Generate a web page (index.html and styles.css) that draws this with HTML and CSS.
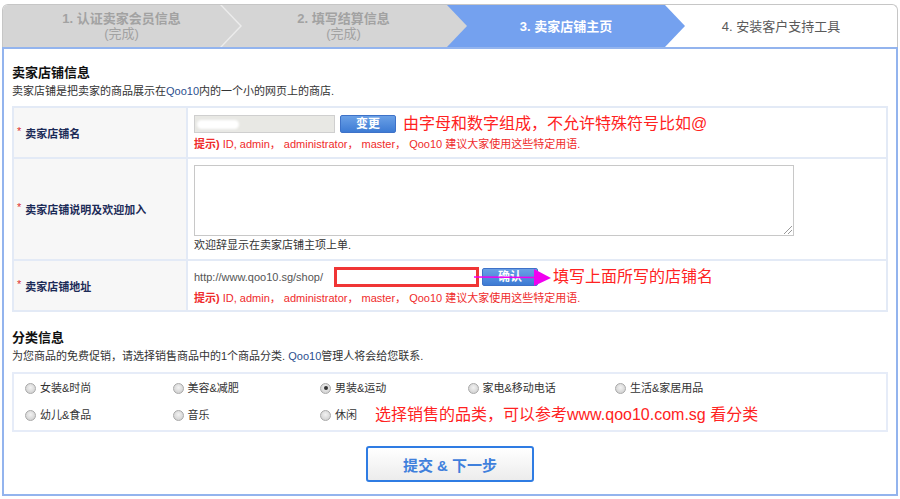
FILE: index.html
```html
<!DOCTYPE html>
<html lang="zh-CN">
<head>
<meta charset="utf-8">
<title>卖家店铺主页</title>
<link rel="stylesheet" href="styles.css">
</head>
<body>
<div class="page">
  <div class="steps">
    <div class="step done first"><span class="st-title">1. 认证卖家会员信息</span><span class="st-sub">(完成)</span></div>
    <div class="step done second"><span class="st-title">2. 填写结算信息</span><span class="st-sub">(完成)</span></div>
    <div class="step current"><span class="st-title">3. 卖家店铺主页</span></div>
    <div class="step todo"><span class="st-title">4. 安装客户支持工具</span></div>
  </div>
  <div class="main">
    <h2 class="sec-title first-sec">卖家店铺信息</h2>
    <p class="sec-desc">卖家店铺是把卖家的商品展示在<span class="qoo">Qoo10</span>内的一个小的网页上的商店.</p>

    <div class="form">
      <div class="row row-name">
        <div class="label"><span class="req">*</span>卖家店铺名</div>
        <div class="value">
          <div class="line">
            <span class="txt-input gray"><span class="blur"></span></span>
            <span class="btn">变更</span>
            <span class="note">由字母和数字组成，不允许特殊符号比如@</span>
          </div>
          <div class="hint"><b>提示)</b> ID, admin， administrator， master， Qoo10 建议大家使用这些特定用语.</div>
        </div>
      </div>
      <div class="row row-desc">
        <div class="label"><span class="req">*</span>卖家店铺说明及欢迎加入</div>
        <div class="value">
          <div class="textarea"><span class="grip"></span></div>
          <div class="plain">欢迎辞显示在卖家店铺主项上单.</div>
        </div>
      </div>
      <div class="row row-url">
        <div class="label"><span class="req">*</span>卖家店铺地址</div>
        <div class="value">
          <div class="line">
            <span class="url">http://www.qoo10.sg/shop/</span>
            <span class="txt-input red"></span>
            <span class="btn-wrap">
              <span class="btn">确认</span>
              <svg class="arrow" width="80" height="20" viewBox="0 0 80 20"><line x1="0" y1="9" x2="62" y2="9.5" stroke="#f000f0" stroke-width="1.6"/><polygon points="60,1 77,10 60,18" fill="#f000f0"/></svg>
            </span>
            <span class="note note2">填写上面所写的店铺名</span>
          </div>
          <div class="hint"><b>提示)</b> ID, admin， administrator， master， Qoo10 建议大家使用这些特定用语.</div>
        </div>
      </div>
    </div>

    <h2 class="sec-title second-sec">分类信息</h2>
    <p class="sec-desc">为您商品的免费促销，请选择销售商品中的1个商品分类. <span class="qoo">Qoo10</span>管理人将会给您联系.</p>

    <div class="cats">
      <div class="cat"><span class="radio"></span>女装&amp;时尚</div>
      <div class="cat"><span class="radio"></span>美容&amp;减肥</div>
      <div class="cat"><span class="radio checked"></span>男装&amp;运动</div>
      <div class="cat"><span class="radio"></span>家电&amp;移动电话</div>
      <div class="cat"><span class="radio"></span>生活&amp;家居用品</div>
      <div class="cat"><span class="radio"></span>幼儿&amp;食品</div>
      <div class="cat"><span class="radio"></span>音乐</div>
      <div class="cat"><span class="radio"></span>休闲<span class="note note3">选择销售的品类，可以参考www.qoo10.com.sg 看分类</span></div>
    </div>

    <div class="submit-row"><span class="submit">提交 &amp; 下一步</span></div>
  </div>
</div>
</body>
</html>
```
FILE: styles.css
```css
* { box-sizing: border-box; }
html, body { margin: 0; padding: 0; background: #fff; }
body {
  font-family: "Liberation Sans", "Noto Sans CJK SC", sans-serif;
  font-size: 11px;
  color: #333;
}
.page { width: 900px; padding: 4px 2px 0 2px; }

/* steps */
.steps {
  display: flex;
  height: 43px;
  border: 1px solid #c6c6c6;
  border-bottom: 0;
  border-radius: 6px 6px 0 0;
  overflow: hidden;
  background: #fff;
}
.step {
  position: relative;
  display: flex;
  flex-direction: column;
  align-items: center;
  justify-content: center;
  padding-left: 20px;
  font-size: 13px;
  line-height: 15px;
}
.step.first { flex: 0 0 217px; padding-left: 0; }
.step.first .st-title, .step.first .st-sub { position: relative; left: 10px; }
.step.second { flex: 0 0 227px; }
.step.current { flex: 0 0 218px; }
.step.todo { flex: 1 1 auto; padding-left: 0; }
.step.done { background: #d5d5d5; color: #a2a2a2; }
.step.current { background: #74a1ef; color: #fff; }
.step.todo { color: #5a5a5a; }
.st-title { font-weight: bold; }
.step.todo .st-title { font-weight: normal; }
.st-sub { font-weight: normal; }
.step.done::after, .step.current::after {
  content: "";
  position: absolute;
  top: 0;
  right: -20px;
  width: 20px;
  height: 100%;
  background: inherit;
  clip-path: polygon(0 0, 100% 50%, 0 100%);
  z-index: 2;
}
.step.first::before {
  content: "";
  position: absolute;
  top: -2px;
  right: -22px;
  width: 22px;
  height: calc(100% + 4px);
  background: #ececec;
  clip-path: polygon(0 0, 100% 50%, 0 100%);
  z-index: 1;
}

/* main */
.main {
  border: 2px solid #93b4ee;
  padding: 0 8px 12px 8px;
}
.sec-title {
  margin: 0;
  font-size: 13px;
  line-height: 16px;
  font-weight: bold;
  color: #111;
}
.first-sec { margin-top: 16px; }
.second-sec { margin-top: 18px; }
.sec-desc {
  margin: 3px 0 0 0;
  line-height: 14px;
  color: #333;
}
.qoo { color: #2c4f8e; }

/* form */
.form {
  margin-top: 8px;
  border: 2px solid #e3eaf6;
  border-bottom: 0;
}
.row {
  display: grid;
  grid-template-columns: 174px 1fr;
  border-bottom: 2px solid #e3eaf6;
}
.row-name { height: 51px; }
.row-desc { height: 102px; }
.row-url { height: 51px; }
.label {
  background: #f7f7f7;
  border-right: 2px solid #e3eaf6;
  display: flex;
  align-items: center;
  padding-left: 3px;
  font-weight: bold;
  color: #1c2b57;
}
.req { color: #e03030; font-weight: normal; margin-right: 4px; position: relative; top: -2px; }
.value { padding-left: 6px; }
.row-name .value { padding-top: 7px; }
.row-desc .value { padding-top: 6px; }
.row-url .value { padding-top: 6px; }
.line { display: flex; align-items: center; height: 18px; }
.row-url .line { height: 20px; }
.txt-input { display: inline-block; position: relative; flex-shrink: 0; }
.txt-input.gray {
  width: 141px;
  height: 18px;
  background: #e8e8e4;
  border: 1px solid #cfcfcf;
}
.blur {
  position: absolute;
  left: 2px;
  top: 4px;
  width: 42px;
  height: 9px;
  background: #fff;
  border-radius: 5px;
  filter: blur(1px);
}
.btn {
  display: inline-flex;
  align-items: center;
  justify-content: center;
  flex-shrink: 0;
  width: 56px;
  height: 18px;
  margin-left: 5px;
  border: 1px solid #3e72c8;
  border-radius: 2px;
  background: linear-gradient(#6aa0e6, #3d7bd4);
  color: #fff;
  font-weight: bold;
  font-size: 12px;
  line-height: 16px;
}
.note {
  color: #ff2222;
  font-size: 16px;
  line-height: 18px;
  margin-left: 7px;
  white-space: nowrap;
}
.hint {
  margin-top: 4px;
  line-height: 14px;
  color: #ef2b2b;
  white-space: nowrap;
}
.hint b { font-weight: bold; }
.textarea {
  position: relative;
  width: 600px;
  height: 71px;
  border: 1px solid #c8c8c8;
  background: #fff;
}
.grip {
  position: absolute;
  right: 1px;
  bottom: 1px;
  width: 8px;
  height: 8px;
  background: linear-gradient(135deg, transparent 45%, #999 45%, #999 55%, transparent 55%, transparent 70%, #999 70%, #999 80%, transparent 80%);
}
.plain { margin-top: 2px; line-height: 14px; color: #333; }
.url { color: #555; margin-right: 11px; }
.txt-input.red {
  width: 145px;
  height: 20px;
  border: 3px solid #f03535;
  background: #fff;
}
.btn-wrap { position: relative; display: inline-flex; flex-shrink: 0; }
.btn-wrap .btn { margin-left: 3px; }
.arrow { position: absolute; left: -5px; top: 0; }
.note2 { margin-left: 15px; }

/* categories */
.cats {
  margin-top: 9px;
  border: 2px solid #e6ecf8;
  display: grid;
  grid-template-columns: repeat(5, 147.5px);
  row-gap: 13px;
  padding: 7px 0 8px 11px;
}
.cat {
  display: flex;
  align-items: center;
  height: 14px;
  line-height: 14px;
  color: #333;
  white-space: nowrap;
}
.radio {
  display: inline-block;
  flex-shrink: 0;
  width: 11px;
  height: 11px;
  border-radius: 50%;
  border: 1px solid #a9a9a9;
  background: radial-gradient(circle at 50% 40%, #f2f2f2, #c9c9c9);
  margin-right: 4px;
  position: relative;
}
.radio.checked::after {
  content: "";
  position: absolute;
  left: 2.5px;
  top: 2.5px;
  width: 4px;
  height: 4px;
  border-radius: 50%;
  background: #333;
}
.note3 { margin-left: 18px; }

.submit-row { display: flex; justify-content: center; margin-top: 14px; }
.submit {
  display: inline-flex;
  align-items: center;
  justify-content: center;
  width: 168px;
  height: 36px;
  border: 2px solid #2f7ce3;
  border-radius: 3px;
  background: linear-gradient(#ffffff, #ececec);
  color: #3f80dc;
  font-size: 15px;
  font-weight: bold;
}
```
